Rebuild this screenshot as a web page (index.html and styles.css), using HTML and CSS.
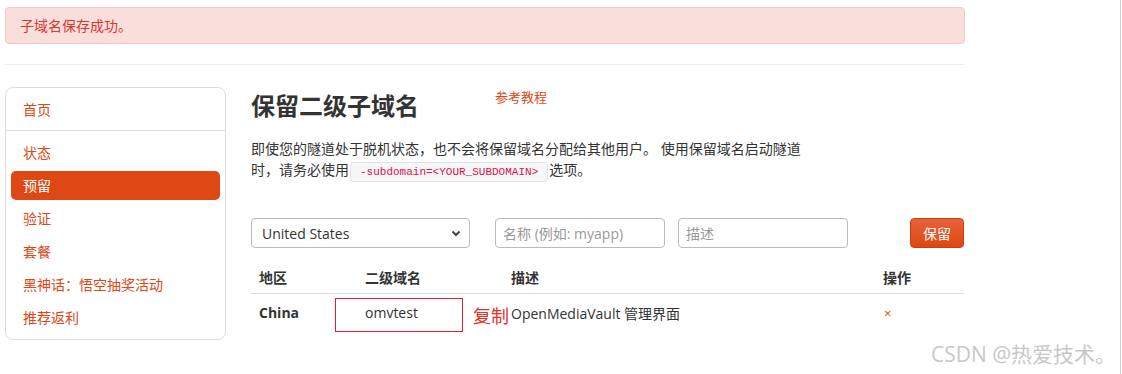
FILE: index.html
```html
<!DOCTYPE html>
<html lang="zh-cn">
<head>
  <meta charset="UTF-8" />
  <title>保留二级子域名</title>
  <link rel="stylesheet" href="styles.css">
</head>
<body>
  <div class="janela">
    <div class="pagina">
      <div class="alerta">子域名保存成功。</div>
      <hr class="divisor" />

      <div class="principal">
        <aside class="menu">
          <div class="menu-topo"><a href="#">首页</a></div>
          <ul>
            <li><a href="#">状态</a></li>
            <li><a href="#" class="ativo">预留</a></li>
            <li><a href="#">验证</a></li>
            <li><a href="#">套餐</a></li>
            <li><a href="#">黑神话：悟空抽奖活动</a></li>
            <li><a href="#">推荐返利</a></li>
          </ul>
        </aside>

        <main class="conteudo">
          <div class="titulo">
            <h2>保留二级子域名</h2>
            <a href="#" class="tutorial">参考教程</a>
          </div>
          <p class="descricao">即使您的隧道处于脱机状态，也不会将保留域名分配给其他用户。 使用保留域名启动隧道时，请务必使用<code>-subdomain=&lt;YOUR_SUBDOMAIN&gt;</code>选项。</p>

          <form class="formulario">
            <div class="seletor">
              <span>United States</span>
              <svg width="10" height="7" viewBox="0 0 10 7"><path d="M1.5 1.5 L5 5 L8.5 1.5" fill="none" stroke="#444" stroke-width="2"/></svg>
            </div>
            <input type="text" class="campo" placeholder="名称 (例如: myapp)" />
            <input type="text" class="campo campo-desc" placeholder="描述" />
            <button type="button" class="botao">保留</button>
          </form>

          <div class="tabela">
            <div class="linha cabecalho">
              <span>地区</span>
              <span>二级域名</span>
              <span>描述</span>
              <span>操作</span>
            </div>
            <div class="linha dados">
              <span class="regiao">China</span>
              <span>omvtest</span>
              <span>OpenMediaVault 管理界面</span>
              <span class="remover">×</span>
              <div class="marca-caixa"></div>
              <div class="marca-texto">复制</div>
            </div>
          </div>
        </main>
      </div>
    </div>
    <div class="watermark">CSDN @热爱技术。</div>
  </div>
</body>
</html>
```

FILE: styles.css
```css
:root {
  --laranja: #dd4814;
  --texto: #333;
}

* {
  margin: 0;
  padding: 0;
  box-sizing: border-box;
}

body {
  font-family: 'Open Sans', 'Noto Sans CJK SC', sans-serif;
  font-size: 14px;
  color: var(--texto);
  background: #fff;
}

.janela {
  position: relative;
  width: 1121px;
  height: 374px;
  border-right: 1px solid #cfcfcf;
  overflow: hidden;
}

.pagina {
  width: 960px;
  margin-left: 5px;
  padding-top: 7px;
}

.alerta {
  height: 37px;
  line-height: 35px;
  padding: 0 14px;
  background-color: #fadedc;
  border: 1px solid #f5c8c9;
  border-radius: 4px;
  color: #d9362c;
}

.divisor {
  border: none;
  border-top: 1px solid #eee;
  margin-top: 20px;
}

.principal {
  display: flex;
  margin-top: 22px;
}

.menu {
  width: 221px;
  height: 253px;
  border: 1px solid #ddd;
  border-radius: 8px;
  flex-shrink: 0;
}

.menu a {
  color: var(--laranja);
  text-decoration: none;
}

.menu-topo {
  height: 43px;
  line-height: 44px;
  padding-left: 17px;
  border-bottom: 1px solid #ddd;
}

.menu ul {
  list-style: none;
  display: flex;
  flex-direction: column;
  gap: 4px;
  padding: 7px 5px 0;
}

.menu ul a {
  display: block;
  height: 29px;
  line-height: 30px;
  padding-left: 12px;
  border-radius: 5px;
}

.menu ul a.ativo {
  background-color: var(--laranja);
  color: #fff;
}

.conteudo {
  margin-left: 25px;
  flex: 1;
}

.titulo {
  display: flex;
  align-items: flex-start;
  margin-top: 4px;
}

.titulo h2 {
  font-size: 24px;
  font-weight: bold;
  line-height: 30px;
}

.tutorial {
  margin-left: 76px;
  margin-top: -4px;
  font-size: 13px;
  color: var(--laranja);
  text-decoration: none;
}

.descricao {
  width: 556px;
  margin-top: 17px;
  line-height: 21px;
}

.descricao code {
  display: inline-block;
  font-family: 'Liberation Mono', monospace;
  font-size: 11px;
  line-height: 16px;
  color: #dd1144;
  background-color: #f7f7f9;
  border: 1px solid #e1e1e8;
  border-radius: 3px;
  padding: 1px 9px;
  margin: 0 1px;
  vertical-align: 0;
}

.formulario {
  display: flex;
  margin-top: 36px;
  height: 30px;
}

.seletor {
  width: 219px;
  height: 30px;
  border: 1px solid #bbb;
  border-radius: 4px;
  display: flex;
  align-items: center;
  justify-content: space-between;
  padding: 0 8px 0 10px;
}

.campo {
  width: 170px;
  height: 30px;
  margin-left: 25px;
  border: 1px solid #bbb;
  border-radius: 4px;
  padding: 0 7px;
  font-family: inherit;
  font-size: 14px;
}

.campo::placeholder {
  color: #999;
}

.campo-desc {
  margin-left: 13px;
}

.botao {
  width: 54px;
  height: 30px;
  margin-left: 62px;
  border: 1px solid #c8400f;
  border-radius: 4px;
  background: linear-gradient(#e8623a, #dd4814);
  color: #fff;
  font-family: inherit;
  font-size: 14px;
}

.tabela {
  width: 713px;
  margin-top: 12px;
}

.linha {
  position: relative;
  display: grid;
  grid-template-columns: 106px 146px 372px 89px;
  align-items: center;
}

.linha span {
  padding-left: 8px;
}

.cabecalho {
  height: 34px;
  font-weight: bold;
  border-bottom: 1px solid #ddd;
}

.dados {
  height: 38px;
  padding-bottom: 1px;
}

.regiao {
  font-weight: bold;
}

.remover {
  color: var(--laranja);
  font-size: 13px;
  padding-left: 9px !important;
}

.marca-caixa {
  position: absolute;
  left: 84px;
  top: 4px;
  width: 128px;
  height: 34px;
  border: 1px solid #e0202a;
}

.marca-texto {
  position: absolute;
  left: 222px;
  top: 8px;
  font-size: 18px;
  color: #e5302a;
}

.watermark {
  position: absolute;
  right: 4px;
  bottom: 6px;
  font-size: 21px;
  color: #c8c8c8;
}
```
